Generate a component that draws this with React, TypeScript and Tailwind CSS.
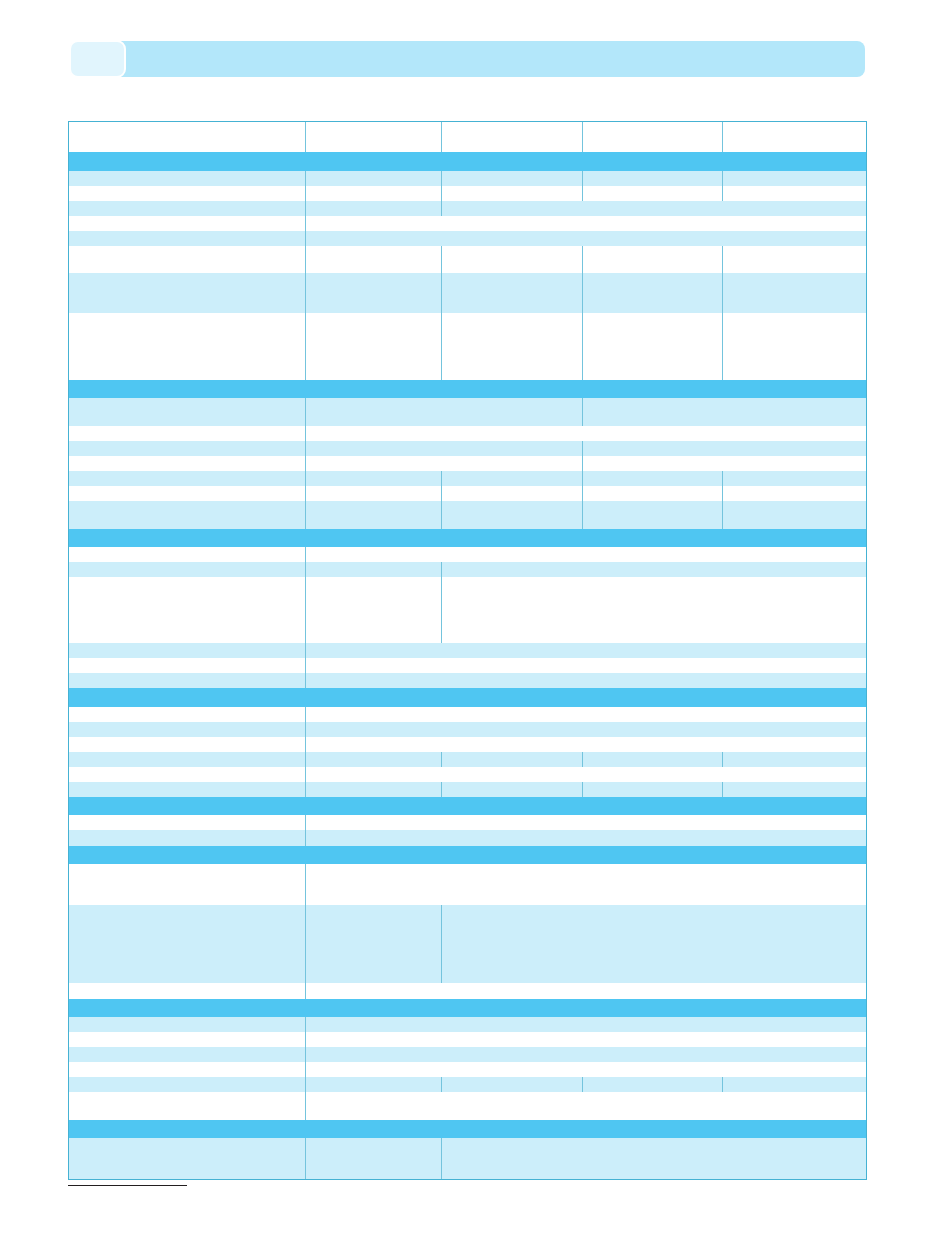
import React from 'react';

type Layout = 'full' | 'l4' | 'l13' | 'l22' | 'band';

interface Row {
  h: string;
  kind: Layout;
  light?: boolean;
}

// column spans after the label cell, written out so tailwind picks them up
const spans: Record<Exclude<Layout, 'band'>, string[]> = {
  full: ['col-span-1', 'col-span-1', 'col-span-1', 'col-span-1'],
  l4: ['col-span-4'],
  l13: ['col-span-1', 'col-span-3'],
  l22: ['col-span-2', 'col-span-2'],
};

const rows: Row[] = [
  { h: 'h-[30px]', kind: 'full' },
  { h: 'h-[19px]', kind: 'band' },
  { h: 'h-[15px]', kind: 'full', light: true },
  { h: 'h-[15px]', kind: 'full' },
  { h: 'h-[15px]', kind: 'l13', light: true },
  { h: 'h-[15px]', kind: 'l4' },
  { h: 'h-[15px]', kind: 'l4', light: true },
  { h: 'h-[27px]', kind: 'full' },
  { h: 'h-[40px]', kind: 'full', light: true },
  { h: 'h-[67px]', kind: 'full' },

  { h: 'h-[18px]', kind: 'band' },
  { h: 'h-[28px]', kind: 'l22', light: true },
  { h: 'h-[15px]', kind: 'l4' },
  { h: 'h-[15px]', kind: 'l22', light: true },
  { h: 'h-[15px]', kind: 'l22' },
  { h: 'h-[15px]', kind: 'full', light: true },
  { h: 'h-[15px]', kind: 'full' },
  { h: 'h-[28px]', kind: 'full', light: true },

  { h: 'h-[18px]', kind: 'band' },
  { h: 'h-[15px]', kind: 'l4' },
  { h: 'h-[15px]', kind: 'l13', light: true },
  { h: 'h-[66px]', kind: 'l13' },
  { h: 'h-[15px]', kind: 'l4', light: true },
  { h: 'h-[15px]', kind: 'l4' },
  { h: 'h-[15px]', kind: 'l4', light: true },

  { h: 'h-[19px]', kind: 'band' },
  { h: 'h-[15px]', kind: 'l4' },
  { h: 'h-[15px]', kind: 'l4', light: true },
  { h: 'h-[15px]', kind: 'l4' },
  { h: 'h-[15px]', kind: 'full', light: true },
  { h: 'h-[15px]', kind: 'l4' },
  { h: 'h-[15px]', kind: 'full', light: true },

  { h: 'h-[18px]', kind: 'band' },
  { h: 'h-[15px]', kind: 'l4' },
  { h: 'h-[16px]', kind: 'l4', light: true },

  { h: 'h-[18px]', kind: 'band' },
  { h: 'h-[41px]', kind: 'l4' },
  { h: 'h-[78px]', kind: 'l13', light: true },
  { h: 'h-[16px]', kind: 'l4' },

  { h: 'h-[18px]', kind: 'band' },
  { h: 'h-[15px]', kind: 'l4', light: true },
  { h: 'h-[15px]', kind: 'l4' },
  { h: 'h-[15px]', kind: 'l4', light: true },
  { h: 'h-[15px]', kind: 'l4' },
  { h: 'h-[15px]', kind: 'full', light: true },
  { h: 'h-[28px]', kind: 'l4' },

  { h: 'h-[18px]', kind: 'band' },
  { h: 'h-[41px]', kind: 'l13', light: true },
];

function TableRow({ row }: { row: Row }) {
  if (row.kind === 'band') {
    return <div className={`col-span-5 ${row.h} bg-[#4fc6f2]`} />;
  }
  const bg = row.light ? 'bg-[#cceefa]' : 'bg-white';
  return (
    <>
      <div className={`${row.h} ${bg}`} />
      {spans[row.kind].map((span, i) => (
        <div key={i} className={`${span} ${row.h} ${bg} border-l border-[#74c4dd]`} />
      ))}
    </>
  );
}

export default function App() {
  return (
    <div className="min-h-screen bg-white font-['Liberation_Sans',Arial,sans-serif] pt-[40px] pb-10">
      {/* title strip */}
      <div className="ml-[69px] mr-[70px] flex h-[38px]">
        <div className="relative z-10 w-[57px] shrink-0 rounded-[9px] border-2 border-white bg-[#e1f5fd]" />
        <div className="-ml-[12px] my-px flex-1 rounded-r-[8px] bg-[#b3e7fa]" />
      </div>

      {/* spec table */}
      <div className="mt-[43px] ml-[68px] w-[799px] border border-[#45b2d3] grid grid-cols-[236px_136px_141px_140px_144px]">
        {rows.map((row, i) => (
          <TableRow key={i} row={row} />
        ))}
      </div>

      {/* footnote rule */}
      <div className="mt-[5px] ml-[68px] h-px w-[119px] bg-[#231f20]" />
    </div>
  );
}
